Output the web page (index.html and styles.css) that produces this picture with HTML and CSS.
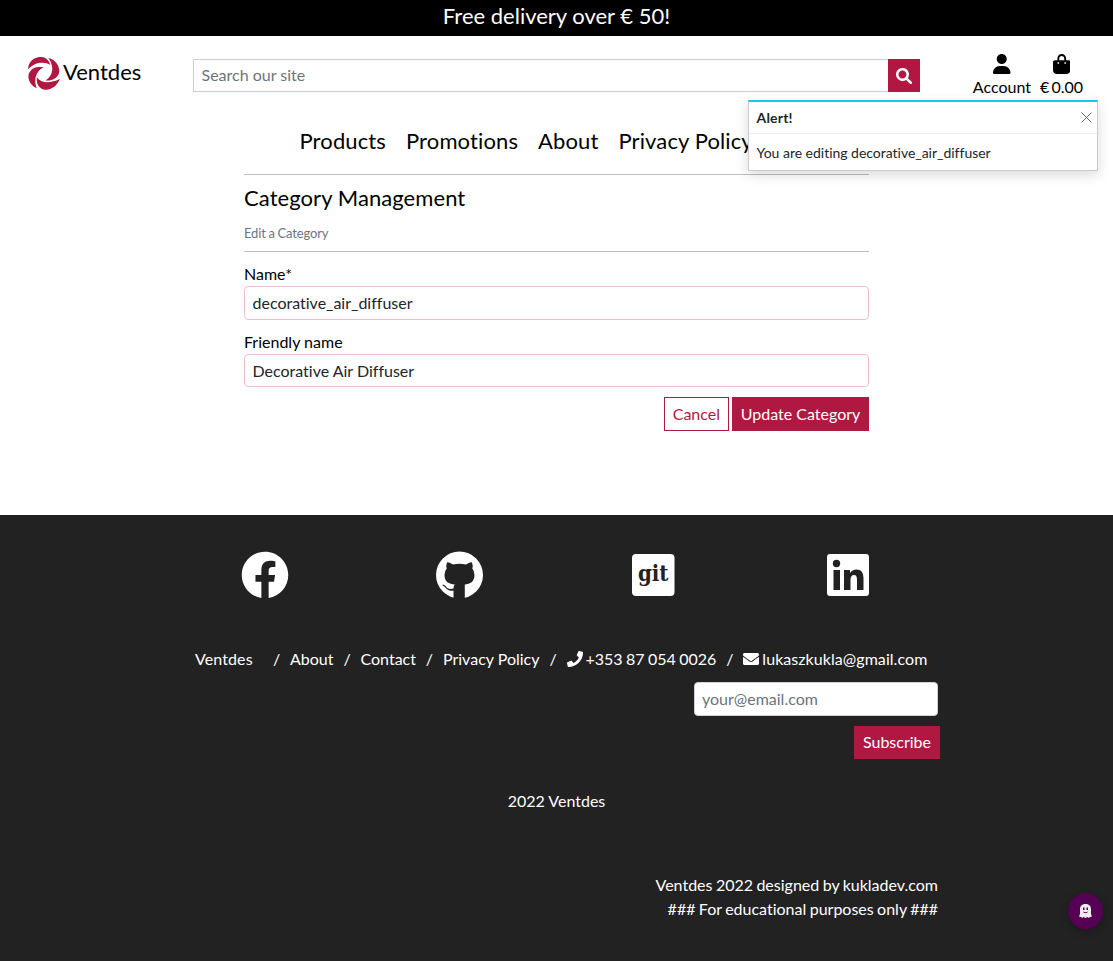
FILE: index.html
```
<!DOCTYPE html>
<html lang="en">
<head>
<meta charset="utf-8">
<title>Ventdes</title>
<link rel="stylesheet" href="styles.css">
</head>
<body>
<div class="banner">Free delivery over € 50!</div>
<header class="header">
  <a class="brand"><svg class="logo" viewBox="84 170 96 100"><path d="M84 208C84 182 104 168 126 170C140 172 148 182 151 194C134 184 104 184 84 208ZM145 173C168 178 181 199 178 217C173 236 154 243 137 241C157 228 166 202 145 173ZM180 237C171 260 150 272 134 269C116 265 107 250 111 232C122 248 148 252 180 237ZM110 265C91 257 81 236 86 221C93 201 112 198 131 201C110 212 99 235 110 265Z"/></svg><span>Ventdes</span></a>
  <form class="search"><input class="search-input" placeholder="Search our site"><button type="button" class="search-button"><svg viewBox="0 0 512 512"><path d="M500.3 443.7l-119.7-119.7c27.22-40.41 40.65-90.9 33.46-144.7C401.8 87.79 326.8 13.32 235.2 1.723C99.01-15.51-15.51 99.01 1.724 235.2c11.6 91.64 86.08 166.7 177.6 178.9c53.8 7.189 104.3-6.236 144.7-33.46l119.7 119.7c15.62 15.62 40.95 15.62 56.57 0C515.9 484.7 515.9 459.3 500.3 443.7zM79.1 208c0-70.58 57.42-128 128-128s128 57.42 128 128c0 70.58-57.42 128-128 128S79.1 278.6 79.1 208z"/></svg></button></form>
  <div class="tools">
    <a class="tool"><svg viewBox="0 0 448 512"><path d="M224 256c70.7 0 128-57.31 128-128s-57.3-128-128-128C153.3 0 96 57.31 96 128S153.3 256 224 256zM274.7 304H173.3C77.61 304 0 381.6 0 477.3c0 19.14 15.52 34.67 34.66 34.67h378.7C432.5 512 448 496.5 448 477.3C448 381.6 370.4 304 274.7 304z"/></svg><span>Account</span></a>
    <a class="tool"><svg viewBox="0 0 448 512"><path d="M112 112C112 50.14 162.1 0 224 0C285.9 0 336 50.14 336 112V160H400C426.5 160 448 181.5 448 208V416C448 469 405 512 352 512H96C42.98 512 0 469 0 416V208C0 181.5 21.49 160 48 160H112V112zM160 160H288V112C288 76.65 259.3 48 224 48C188.7 48 160 76.65 160 112V160zM136 256C149.3 256 160 245.3 160 232C160 218.7 149.3 208 136 208C122.7 208 112 218.7 112 232C112 245.3 122.7 256 136 256zM312 208C298.7 208 288 218.7 288 232C288 245.3 298.7 256 312 256C325.3 256 336 245.3 336 232C336 218.7 325.3 208 312 208z"/></svg><span>€ 0.00</span></a>
  </div>
</header>
<nav class="nav"><a>Products</a><a>Promotions</a><a>About</a><a>Privacy Policy</a></nav>
<main class="content">
  <div class="heading"><h1>Category Management</h1><p>Edit a Category</p></div>
  <form>
    <label class="field"><span>Name*</span><input value="decorative_air_diffuser"></label>
    <label class="field"><span>Friendly name</span><input value="Decorative Air Diffuser"></label>
    <div class="actions"><button type="button" class="button outline">Cancel</button><button type="button" class="button update">Update Category</button></div>
  </form>
</main>
<footer class="footer">
  <div class="social">
    <a><svg viewBox="0 0 512 512"><path d="M504 256C504 119 393 8 256 8S8 119 8 256c0 123.78 90.69 226.38 209.25 245V327.69h-63V256h63v-54.64c0-62.15 37-96.48 93.67-96.48 27.14 0 55.52 4.84 55.52 4.84v61h-31.28c-30.8 0-40.41 19.12-40.41 38.73V256h68.78l-11 71.69h-57.78V501C413.31 482.38 504 379.78 504 256z"/></svg></a>
    <a><svg viewBox="0 0 48 48"><circle cx="24.500" cy="24" r="23.500"/><path class="cat" d="M12 11.500Q12.800 10.500 18 13.500Q24.500 12 31 13.500Q36 10.500 37 11.500Q38.200 14.500 37.300 17.500Q39.500 20 39.500 24C39.500 31 35 33 29.800 33.500V48H18.500V39.500C11.500 41 11 35.500 7.500 34.500C7 33.500 9.500 33.500 11 35.500C13 38.500 15.500 38 18.500 37.500Q18.500 34.500 19.800 33.500C14 33 9.500 31 9.500 24Q9.500 20 11.700 17.500Q10.800 14.500 12 11.500Z"/></svg></a>
    <a><svg viewBox="0 0 48 48"><rect x="3" y="3" width="42.5" height="42" rx="4"/><text class="git-text" x="9" y="30" textLength="30.5" lengthAdjust="spacingAndGlyphs">git</text></svg></a>
    <a><svg viewBox="0 0 48 48"><rect x="3" y="3" width="42" height="42" rx="3"/><g class="linked"><circle cx="12.500" cy="12.500" r="3.700"/><path d="M9.500 19H16V39H9.500ZM20 19H26V22Q28.300 18.500 32.500 18.500C38 18.500 39.500 22.500 39.500 27.500V39H33V29C33 26 32.500 24 30 24S26.500 26 26.500 29V39H20Z"/></g></svg></a>
  </div>
  <div class="links">
    <a class="home">Ventdes</a><i>/</i><a>About</a><i>/</i><a>Contact</a><i>/</i><a>Privacy Policy</a><i>/</i><a class="phone"><svg viewBox="0 0 512 512"><path d="M493.4 24.6l-104-24c-11.3-2.6-22.9 3.3-27.5 13.9l-48 112c-4.2 9.8-1.4 21.3 6.9 28l60.6 49.6c-36 76.7-98.9 140.5-177.2 177.2l-49.6-60.6c-6.8-8.3-18.2-11.1-28-6.9l-112 48C3.9 366.5-2 378.1.6 389.4l24 104C27.1 504.2 36.7 512 48 512c256.1 0 464-207.5 464-464 0-11.2-7.7-20.9-18.6-23.4z"/></svg>+353 87 054 0026</a><i>/</i><a class="mail"><svg viewBox="0 0 512 512"><path d="M502.3 190.8c3.9-3.1 9.7-.2 9.7 4.7V400c0 26.5-21.5 48-48 48H48c-26.5 0-48-21.5-48-48V195.6c0-5 5.7-7.8 9.7-4.7 22.4 17.4 52.1 39.5 154.1 113.6 21.1 15.4 56.7 47.8 92.2 47.6 35.7.3 72-32.8 92.3-47.6 102-74.1 131.6-96.3 154-113.7zM256 320c23.2.4 56.6-29.2 73.4-41.4 132.7-96.3 142.8-104.7 173.4-128.7 5.8-4.5 9.2-11.5 9.2-18.9v-19c0-26.5-21.5-48-48-48H48c-26.5 0-48 21.5-48 48v19c0 7.4 3.4 14.3 9.2 18.9 30.6 23.9 40.7 32.4 173.4 128.7 16.8 12.2 50.2 41.8 73.4 41.4z"/></svg>lukaszkukla@gmail.com</a>
  </div>
  <form class="subscribe"><input placeholder="your@email.com"><button type="button" class="button">Subscribe</button></form>
  <p class="copyright">2022 Ventdes</p>
  <p class="credits">Ventdes 2022 designed by kukladev.com<br>### For educational purposes only ###</p>
</footer>
<div class="toast">
  <div class="toast-header"><strong>Alert!</strong><svg viewBox="0 0 11 11"><path d="M.5.5l10 10M10.500.5l-10 10"/></svg></div>
  <div class="toast-body">You are editing decorative_air_diffuser</div>
</div>
<div class="ghost"><svg viewBox="0 0 13 14"><path class="ghost-body" d="M1 5C1 1.800 3.500 0 6.500 0S12 1.800 12 5V10L13 12.500L11 13L10 14L8.500 13L6.500 14L4.500 13L3 14L2 13L0 12.500L1 10Z"/><path class="ghost-face" d="M4 3.500H5.500V6H4ZM7.500 3.500H9V6H7.500ZM4 7.500Q6.500 9 9 7.500Q8.500 9.300 6.500 9.300T4 7.500Z"/></svg></div>
</body>
</html>
```

FILE: styles.css
```
* { box-sizing: border-box; }
body { margin: 0; height: 961px; display: flex; flex-direction: column; position: relative; overflow: hidden; background: #fff; color: #000; font: 16px/24px Lato, sans-serif; font-variant-ligatures: none; }
h1, p { margin: 0; font-weight: 400; }
input, button { font: inherit; font-variant-ligatures: none; }
svg { flex: none; }
.banner { height: 36px; background: #000; color: #fff; text-align: center; font-size: 22px; line-height: 32px; }
.header { height: 88px; display: flex; padding: 0 30px 0 28px; }
.brand { width: 165px; height: 33px; margin-top: 21px; display: flex; gap: 3px; font-size: 22px; line-height: 30px; }
.logo { width: 32px; height: 33px; fill: #b01842; }
.search { display: flex; width: 727px; height: 33px; margin-top: 23px; }
.search-input { flex: 1; border: 1px solid #e8c0ce; border-right: 0; padding: 0 8px 2px 7.500px; outline: 0; }
.search-button { width: 32px; border: 0; padding: 0; background: #b01842; display: flex; align-items: center; justify-content: center; }
.search-button svg { width: 16px; height: 16px; fill: #fff; }
input::placeholder { color: #6c757d; opacity: 1; }
.tools { display: flex; gap: 9px; margin-left: auto; padding-top: 18px; word-spacing: -2px; }
.tool { display: flex; flex-direction: column; align-items: center; line-height: 24px; }
.tool svg { width: 17.500px; height: 20px; margin-bottom: 1px; }
.nav { height: 50px; display: flex; gap: 20px; font-size: 22px; line-height: 34px; padding-left: 299.500px; letter-spacing: .12px; }
.content { width: 625px; height: 341px; margin: 0 auto; }
.heading { height: 78px; border-top: 1px solid #bfbfbf; border-bottom: 1px solid #bfbfbf; padding-top: 6px; }
h1 { font-size: 22px; line-height: 33px; letter-spacing: .07px; }
.heading p { margin-top: 9px; font-size: 13px; line-height: 20px; color: #6c757d; word-spacing: -.500px; letter-spacing: -.14px; }
.field { display: block; height: 68px; }
.heading + form { padding-top: 10px; }
.field span { display: block; height: 24px; line-height: 24px; }
.field input { width: 100%; height: 34px; border: 1px solid #e8c0ce; border-radius: 4px; padding: 0 8px 1px 7.500px; color: #212529; }
.field + .field input { height: 33px; padding-bottom: 0; }
.actions { display: flex; justify-content: flex-end; gap: 3px; margin-top: -1px; }
.button { height: 34px; border: 1px solid #b01842; padding: 0 8px; background: #b01842; color: #fff; }
.update { width: 137px; padding: 0; }
.outline { background: #fff; color: #b01842; }
.footer { flex: 1; background: #222; color: #fff; padding-top: 36px; }
.social { display: grid; grid-template-columns: repeat(4, 194.200px); padding-left: 168px; height: 96px; }
.social a { text-align: center; }
.social svg { width: 48px; height: 48px; fill: #fff; }
.social .git-text { fill: #222; font: bold 22px "DejaVu Serif", serif; }
.social .cat, .linked { fill: #222; }
.links { display: flex; padding-left: 195px; line-height: 24px; }
.links a { display: flex; align-items: center; gap: 3px; white-space: nowrap; }
.links svg { width: 16px; height: 16px; fill: #fff; }
.links .phone { word-spacing: -.700px; }
.links .mail { letter-spacing: .06px; }
.links .home { width: 68px; letter-spacing: .1px; }
.links i { width: 27px; text-align: center; font-style: normal; }
.subscribe { margin: 11px 173px 0 auto; width: 246px; display: flex; flex-direction: column; align-items: flex-end; gap: 10px; }
.subscribe input { width: 244px; height: 34px; margin-right: 2px; border: 1px solid #ced4da; border-radius: 4px; padding: 0 7px 1px; }
.subscribe .button { height: 33px; padding-bottom: 2px; }
.copyright { text-align: center; margin-top: 30px; }
.credits { text-align: right; padding-right: 175px; margin-top: 60px; word-spacing: -.700px; }
.toast { position: absolute; left: 748px; top: 100px; width: 350px; height: 71px; background: #fff; border: 1px solid #ccc; border-top: 2px solid #0dcaf0; box-shadow: 0 4px 12px rgba(0,0,0,.15); color: #212529; font-size: 14px; }
.toast-header { height: 32px; padding: 0 5px 0 7.500px; border-bottom: 1px solid #eee; display: flex; align-items: center; justify-content: space-between; }
.toast-header strong { letter-spacing: .2px; }
.toast-header svg { width: 11px; height: 11px; stroke: #666; fill: none; }
.toast-body { padding: 7px 7.500px; letter-spacing: -.02px; }
.ghost { position: absolute; left: 1068px; top: 893px; width: 35px; height: 36px; border-radius: 50%; background: #550055; box-shadow: 0 2px 8px rgba(0,0,0,.3); display: flex; align-items: center; justify-content: center; }
.ghost svg { width: 13px; height: 14px; }
.ghost-body { fill: #eee; }
.ghost-face { fill: #505; }
```
